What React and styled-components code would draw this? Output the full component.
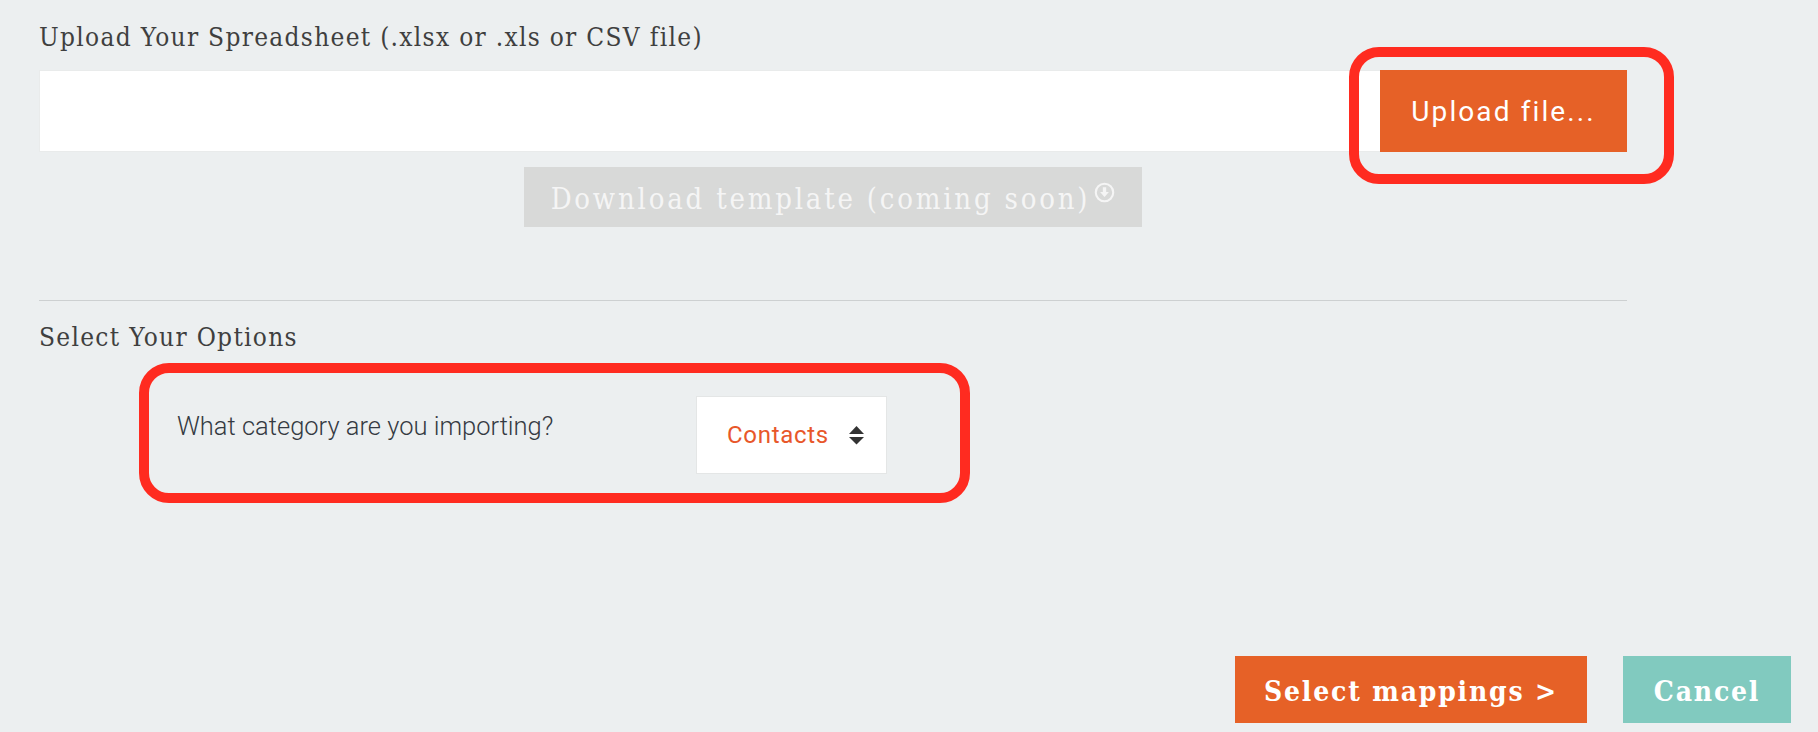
import React from "react"
import styled, { createGlobalStyle } from "styled-components"

const GlobalStyle = createGlobalStyle`
  html, body {
    margin: 0;
    padding: 0;
    background: #eceff0;
  }
  body {
    font-family: "Roboto", "Liberation Sans", sans-serif;
  }
`

const slab = `"DejaVu Serif Condensed", "DejaVu Serif", serif`

const Page = styled.div`
  width: 1818px;
  height: 732px;
  box-sizing: border-box;
  padding: 0 27px 0 39px;
  display: flex;
  flex-direction: column;
  overflow: hidden;
`

const Section = styled.div`
  width: 1588px;
  display: flex;
  flex-direction: column;
`

const Heading = styled.h2`
  margin: ${(p) => p.$top}px 0 0;
  font-family: ${slab};
  font-weight: 400;
  font-size: 26px;
  line-height: 30px;
  letter-spacing: 1.3px;
  color: #3f3f3f;
`

const UploadRow = styled.div`
  margin-top: 18px;
  height: 82px;
  display: flex;
`

const FileField = styled.div`
  flex: 1;
  background: #fff;
  border: 1px solid #e9ebeb;
  border-right: none;
`

const UploadWrap = styled.div`
  position: relative;
  width: 247px;
  display: flex;
`

const UploadButton = styled.button`
  flex: 1;
  border: none;
  background: #e66127;
  color: #fff;
  font-family: "Roboto", sans-serif;
  font-weight: 400;
  font-size: 28px;
  letter-spacing: 2.1px;
  cursor: pointer;
`

const Highlight = styled.div`
  position: absolute;
  top: -23px;
  left: -31px;
  right: -47px;
  bottom: -32px;
  border: 10px solid #ff2b20;
  border-radius: 30px;
  pointer-events: none;
`

const DownloadButton = styled.button`
  margin: 15px auto 0;
  width: 618px;
  height: 60px;
  border: none;
  background: #d8d9d8;
  color: #f5f5f5;
  font-family: ${slab};
  font-size: 29px;
  letter-spacing: 2.8px;
  padding: 4px 0 0;
  display: flex;
  align-items: center;
  justify-content: center;
  gap: 4px;
  svg {
    margin-bottom: 14px;
  }
`

const Divider = styled.hr`
  margin: 73px 0 0;
  border: none;
  border-top: 1px solid #cdd0d1;
  width: 100%;
`

const OptionBox = styled.div`
  margin: 11px 0 0 100px;
  width: 831px;
  height: 140px;
  box-sizing: border-box;
  border: 10px solid #ff2b20;
  border-radius: 30px;
  padding: 23px 0 0 28px;
  display: flex;
  align-items: flex-start;
`

const Question = styled.div`
  width: 519px;
  padding-top: 16px;
  font-family: "Roboto", sans-serif;
  font-weight: 300;
  font-size: 25.5px;
  line-height: 28px;
  color: #353a42;
`

const SelectBox = styled.div`
  width: 191px;
  height: 78px;
  box-sizing: border-box;
  background: #fff;
  border: 1px solid #e4e6e6;
  padding: 0 22px 0 30px;
  display: flex;
  align-items: center;
  justify-content: space-between;
  font-family: "Roboto", sans-serif;
  font-size: 24px;
  letter-spacing: 0.7px;
  color: #e8572a;
`

const Footer = styled.div`
  margin-top: 153px;
  display: flex;
  justify-content: flex-end;
  gap: 36px;
`

const ActionButton = styled.button`
  width: ${(p) => p.$w}px;
  height: 67px;
  border: none;
  background: ${(p) => (p.$cancel ? "#81cabf" : "#e66127")};
  color: #fff;
  font-family: ${slab};
  font-weight: 700;
  font-size: 28px;
  letter-spacing: 1.8px;
  padding-top: 4px;
  cursor: pointer;
`

const DownIcon = () => (
  <svg width="21" height="21" viewBox="0 0 20 20">
    <circle cx="10" cy="10" r="8.3" fill="none" stroke="#f5f5f5" strokeWidth="2" />
    <path d="M8.4 5 H11.6 V9.6 H14.2 L10 14.4 L5.8 9.6 H8.4 Z" fill="#f5f5f5" />
  </svg>
)

const SortIcon = () => (
  <svg width="15" height="20" viewBox="0 0 15 20">
    <path d="M0 9 L7.5 1 L15 9 Z" fill="#333" />
    <path d="M0 12 L15 12 L7.5 19.5 Z" fill="#333" />
  </svg>
)

export default function App() {
  return (
    <>
      <GlobalStyle />
      <Page>
        <Section>
          <Heading $top={22}>Upload Your Spreadsheet (.xlsx or .xls or CSV file)</Heading>
          <UploadRow>
            <FileField />
            <UploadWrap>
              <UploadButton>Upload file...</UploadButton>
              <Highlight />
            </UploadWrap>
          </UploadRow>
          <DownloadButton disabled>
            Download template (coming soon)
            <DownIcon />
          </DownloadButton>
          <Divider />
          <Heading $top={21}>Select Your Options</Heading>
          <OptionBox>
            <Question>What category are you importing?</Question>
            <SelectBox>
              <span>Contacts</span>
              <SortIcon />
            </SelectBox>
          </OptionBox>
        </Section>
        <Footer>
          <ActionButton $w={352}>Select mappings &gt;</ActionButton>
          <ActionButton $w={168} $cancel>Cancel</ActionButton>
        </Footer>
      </Page>
    </>
  )
}
